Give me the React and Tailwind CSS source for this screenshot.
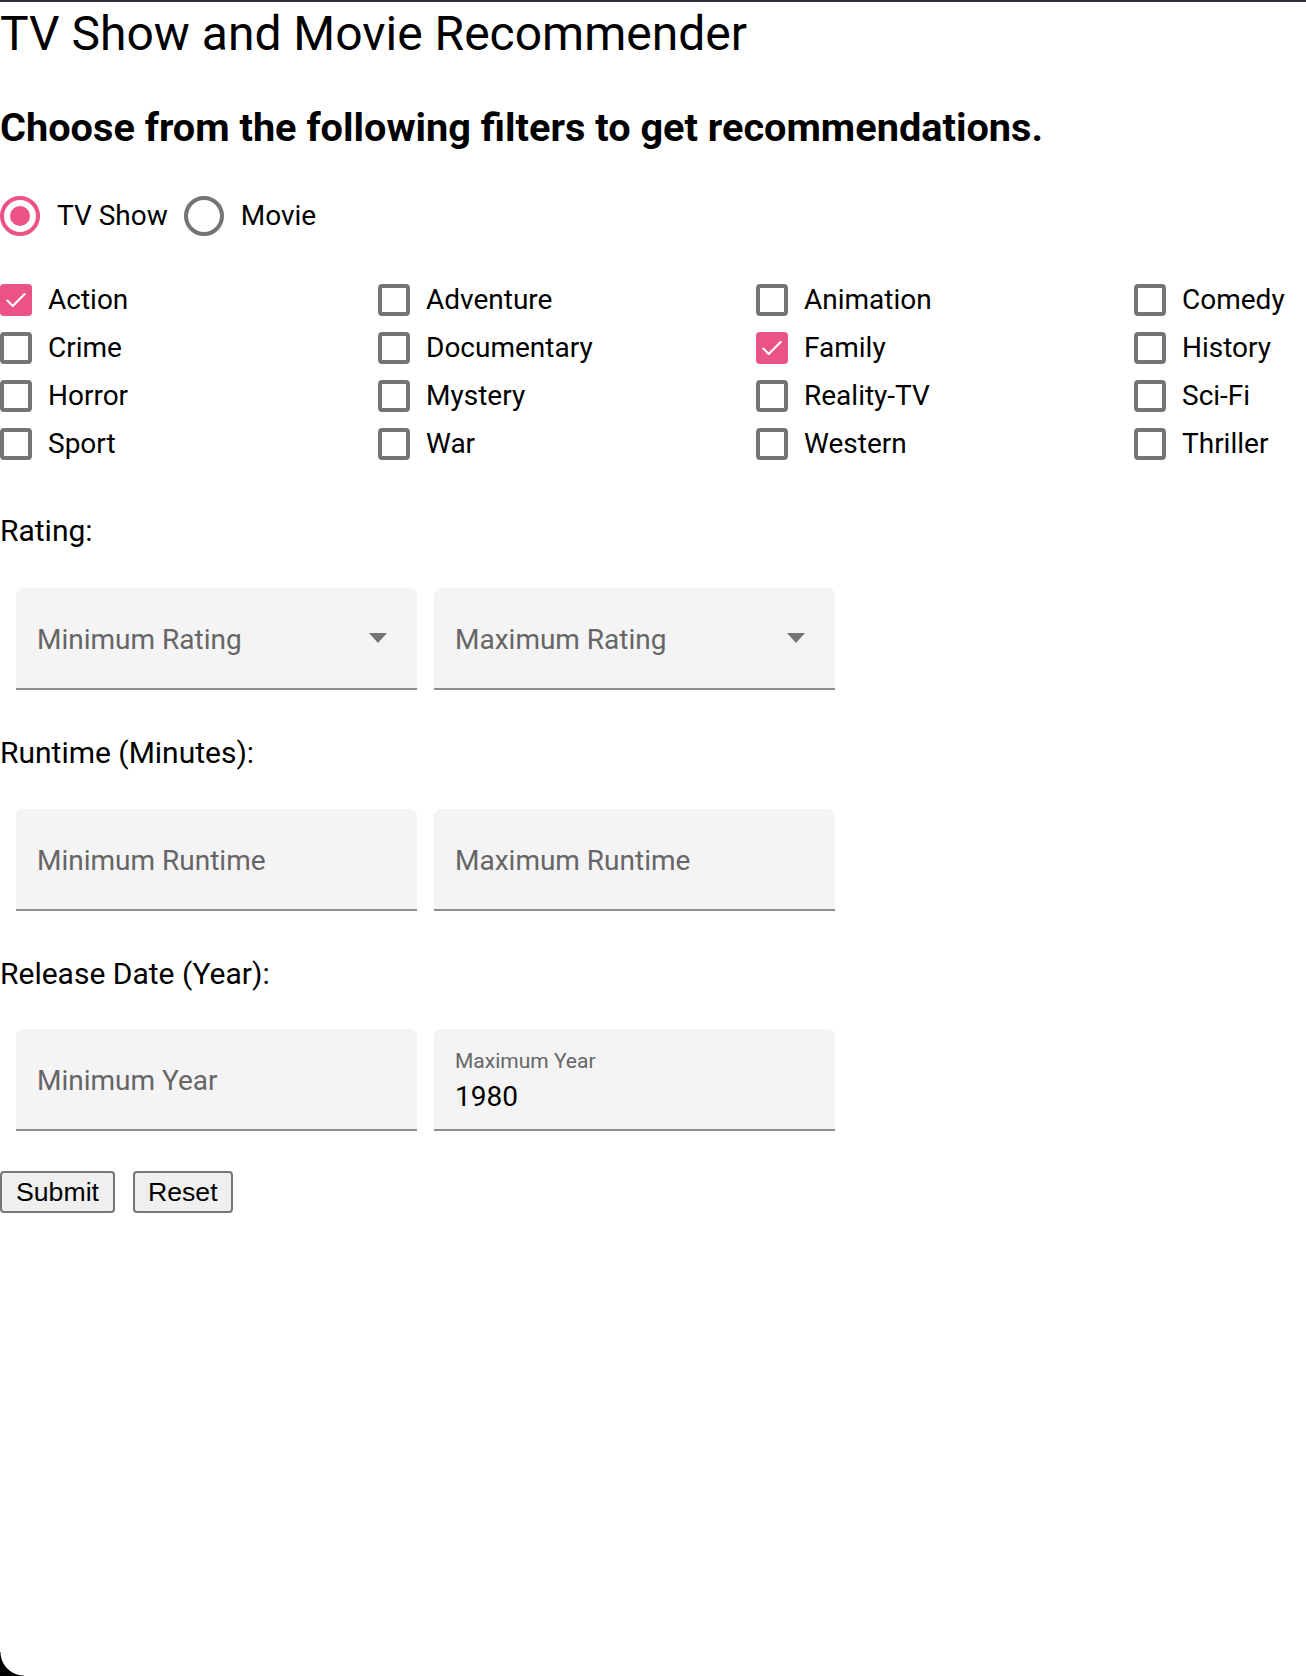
import React, { useState } from 'react';

const genres = [
  'Action', 'Adventure', 'Animation', 'Comedy',
  'Crime', 'Documentary', 'Family', 'History',
  'Horror', 'Mystery', 'Reality-TV', 'Sci-Fi',
  'Sport', 'War', 'Western', 'Thriller',
];

function Radio({ checked, label, onClick }) {
  return (
    <label className="flex items-center cursor-pointer" onClick={onClick}>
      <span
        className={`w-[40px] h-[40px] rounded-full border-[4px] flex items-center justify-center ${
          checked ? 'border-[#eb5286]' : 'border-[#757575]'
        }`}
      >
        {checked && <span className="w-[20px] h-[20px] rounded-full bg-[#eb5286]" />}
      </span>
      <span className="ml-[17px] text-[28px] leading-[40px] text-black">{label}</span>
    </label>
  );
}

function Checkbox({ checked, label, onClick }) {
  return (
    <label className="flex items-center h-[48px] cursor-pointer" onClick={onClick}>
      {checked ? (
        <span className="w-[32px] h-[32px] rounded-[4px] bg-[#eb5286] flex items-center justify-center">
          <svg width="26" height="26" viewBox="0 0 24 24" fill="none">
            <path d="M4 12.5l5 5L20 6.5" stroke="white" strokeWidth="2" strokeLinecap="round" strokeLinejoin="round" />
          </svg>
        </span>
      ) : (
        <span className="w-[32px] h-[32px] rounded-[4px] border-[4px] border-[#757575]" />
      )}
      <span className="ml-[16px] text-[28px] text-black">{label}</span>
    </label>
  );
}

function SelectField({ placeholder }) {
  return (
    <div className="w-[401px] h-[102px] bg-[#f4f4f4] rounded-t-[7px] border-b-2 border-[#8e8e8e] flex items-center justify-between pl-[21px] pr-[30px] pt-[4px]">
      <span className="text-[28px] text-[#666666]">{placeholder}</span>
      <svg width="18" height="10" viewBox="0 0 18 10" className="-mt-[4px]">
        <path d="M0 0h18L9 10z" fill="#757575" />
      </svg>
    </div>
  );
}

function TextField({ placeholder, label, value }) {
  if (value) {
    return (
      <div className="w-[401px] h-[102px] bg-[#f4f4f4] rounded-t-[7px] border-b-2 border-[#8e8e8e] flex flex-col justify-center pl-[21px] pt-[7px]">
        <span className="text-[21px] leading-[24px] text-[#666666]">{label}</span>
        <span className="text-[28px] leading-[38px] text-black mt-[5px]">{value}</span>
      </div>
    );
  }
  return (
    <div className="w-[401px] h-[102px] bg-[#f4f4f4] rounded-t-[7px] border-b-2 border-[#8e8e8e] flex items-center pl-[21px] pt-[4px]">
      <span className="text-[28px] text-[#666666]">{placeholder}</span>
    </div>
  );
}

export default function App() {
  const [type, setType] = useState('tv');
  const [selected, setSelected] = useState(['Action', 'Family']);

  const toggle = (g) =>
    setSelected((s) => (s.includes(g) ? s.filter((x) => x !== g) : [...s, g]));

  return (
    <div className="relative min-h-[1676px] bg-white border-t-2 border-[#2d2e39] overflow-hidden font-['Roboto',sans-serif] text-black">
      <h1 className="mt-[4px] text-[48px] leading-[56px] font-normal">TV Show and Movie Recommender</h1>
      <h2 className="mt-[43px] text-[39.7px] leading-[46px] font-bold">
        Choose from the following filters to get recommendations.
      </h2>

      {/* Type */}
      <div className="mt-[45px] flex items-center gap-[16px]">
        <Radio checked={type === 'tv'} label="TV Show" onClick={() => setType('tv')} />
        <Radio checked={type === 'movie'} label="Movie" onClick={() => setType('movie')} />
      </div>

      {/* Genres */}
      <div className="mt-[40px] grid grid-cols-[repeat(4,378px)]">
        {genres.map((g) => (
          <Checkbox key={g} label={g} checked={selected.includes(g)} onClick={() => toggle(g)} />
        ))}
      </div>

      <div className="mt-[43px] text-[30px] leading-[40px]">Rating:</div>
      <div className="mt-[37px] ml-[16px] flex gap-[17px]">
        <SelectField placeholder="Minimum Rating" />
        <SelectField placeholder="Maximum Rating" />
      </div>

      <div className="mt-[43px] text-[30px] leading-[40px]">Runtime (Minutes):</div>
      <div className="mt-[36px] ml-[16px] flex gap-[17px]">
        <TextField placeholder="Minimum Runtime" />
        <TextField placeholder="Maximum Runtime" />
      </div>

      <div className="mt-[43px] text-[30px] leading-[40px]">Release Date (Year):</div>
      <div className="mt-[35px] ml-[16px] flex gap-[17px]">
        <TextField placeholder="Minimum Year" />
        <TextField label="Maximum Year" value="1980" />
      </div>

      <div className="mt-[40px] flex gap-[18px]">
        <button className="h-[42px] px-[14px] bg-[#efefef] border-2 border-[#767676] rounded-[4px] text-[26.67px] font-['Liberation_Sans',sans-serif] leading-none">
          Submit
        </button>
        <button className="h-[42px] px-[13px] bg-[#efefef] border-2 border-[#767676] rounded-[4px] text-[26.67px] font-['Liberation_Sans',sans-serif] leading-none">
          Reset
        </button>
      </div>

      {/* window corner */}
      <div className="absolute bottom-0 left-0 w-[24px] h-[24px] bg-[radial-gradient(circle_at_top_right,transparent_23px,black_24px)]" />
    </div>
  );
}
